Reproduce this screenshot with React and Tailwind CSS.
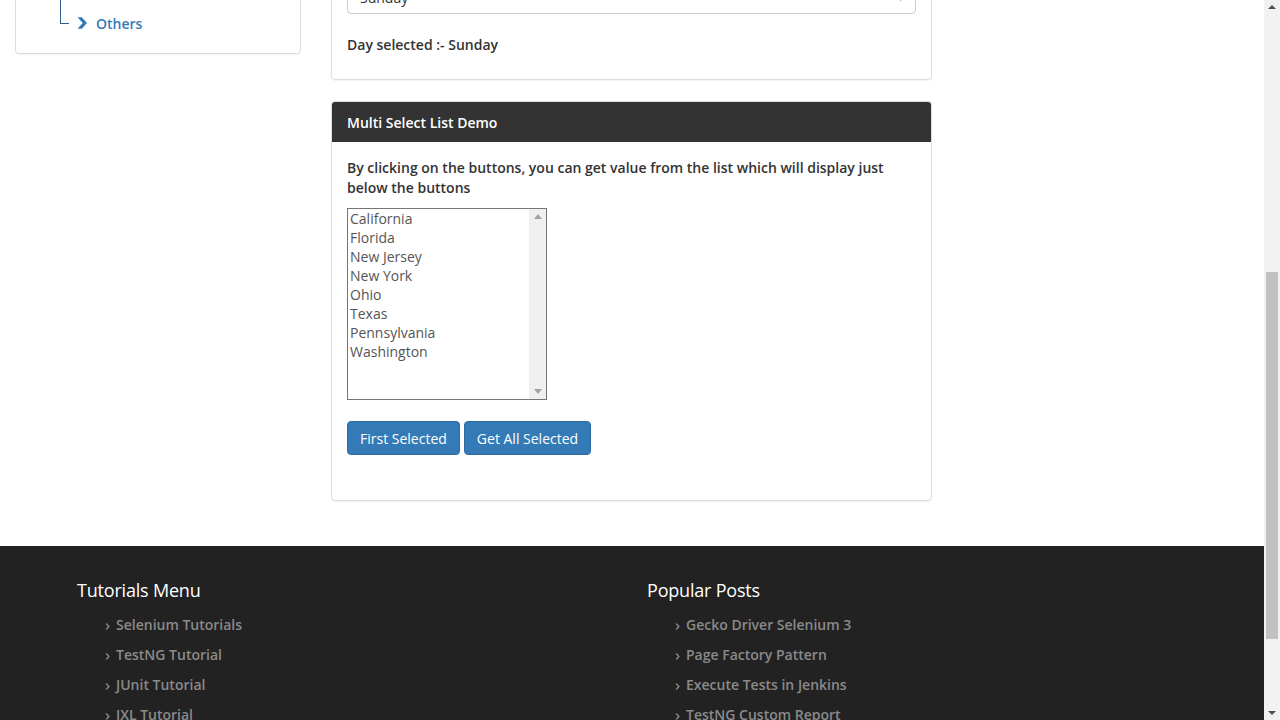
import React from "react";

const font = { fontFamily: "'Open Sans', Lato, sans-serif" };

function Chevron({ className = "" }) {
  return (
    <svg viewBox="0 0 10 12" className={className} fill="currentColor">
      <path d="M0.5 0.3 L4.8 0.3 L10 6 L4.8 11.7 L0.5 11.7 L5.7 6 Z" />
    </svg>
  );
}

function SmallChevron() {
  return (
    <svg viewBox="0 0 5 7" className="w-[5px] h-[7px] mr-[6px] mt-[4px]" fill="currentColor">
      <path d="M0.3 0.5 L2.2 0.5 L4.8 3.5 L2.2 6.5 L0.3 6.5 L2.9 3.5 Z" />
    </svg>
  );
}

const states = ["California", "Florida", "New Jersey", "New York", "Ohio", "Texas", "Pennsylvania", "Washington"];
const tutorials = ["Selenium Tutorials", "TestNG Tutorial", "JUnit Tutorial", "JXL Tutorial"];
const posts = ["Gecko Driver Selenium 3", "Page Factory Pattern", "Execute Tests in Jenkins", "TestNG Custom Report"];

function FooterCol({ title, items }) {
  return (
    <div>
      <h3 className="text-[18px] leading-[24px] text-white font-normal tracking-[-0.2px]">{title}</h3>
      <ul className="mt-[7px] pl-[28px]">
        {items.map((t) => (
          <li key={t} className="flex items-center h-[30px] text-[14px] font-semibold text-[#8a8a8a]">
            <SmallChevron />
            <span>{t}</span>
          </li>
        ))}
      </ul>
    </div>
  );
}

export default function App() {
  return (
    <div className="relative w-[1280px] h-[720px] overflow-hidden bg-white text-[#333]" style={font}>
      <div className="w-[1264px] mt-[-40px]">
        {/* Upper content */}
        <div className="flex items-start">
          {/* Sidebar */}
          <div className="ml-[15px] w-[286px] border border-[#ddd] rounded-[4px] shadow-[0_1px_1px_rgba(0,0,0,0.05)] pb-[15px]">
            <div className="relative pl-[44px] pt-[17px]">
              <div className="absolute left-[44px] top-0 w-[9px] h-[63px] border-l border-b border-[#2f5f8f]" />
              <div className="flex items-center h-[30px] pl-[17px] text-[#337ab7] text-[14px] font-semibold">
                <Chevron className="w-[10px] h-[12px] mr-[9px]" />
                <span>List Box</span>
              </div>
              <div className="flex items-center h-[30px] pl-[17px] text-[#337ab7] text-[14px] font-semibold">
                <Chevron className="w-[10px] h-[12px] mr-[9px]" />
                <span>Others</span>
              </div>
            </div>
          </div>

          {/* Main column */}
          <div className="ml-[30px] mt-[14px] w-[601px]">
            <div className="border border-[#ddd] rounded-[4px] shadow-[0_1px_1px_rgba(0,0,0,0.05)] px-[15px] pt-[5px] pb-[24px]">
              <div className="h-[34px] border border-[#ccc] rounded-[4px] flex items-center justify-between px-[12px] text-[14px]">
                <span>Sunday</span>
                <span className="text-[10px]">▾</span>
              </div>
              <p className="mt-[21px] text-[14px] leading-[20px] font-semibold">Day selected :- Sunday</p>
            </div>

            <div className="mt-[21px] border border-[#ddd] rounded-[4px] overflow-hidden shadow-[0_1px_1px_rgba(0,0,0,0.05)]">
              <div className="h-[40px] bg-[#333333] text-white text-[14px] font-semibold flex items-center px-[15px]">
                Multi Select List Demo
              </div>
              <div className="px-[15px] pt-[16px] pb-[45px]">
                <p className="text-[14px] leading-[20px] font-semibold">
                  By clicking on the buttons, you can get value from the list which will display just below the buttons
                </p>
                <div className="mt-[10px] w-[200px] h-[192px] border border-[#767676] flex">
                  <div className="flex-1 pl-[2px] text-[14px] text-[#555]">
                    {states.map((s) => (
                      <div key={s} className="h-[19px] leading-[19px]">{s}</div>
                    ))}
                  </div>
                  <div className="w-[17px] bg-[#f0f0f0] flex flex-col justify-between items-center py-[5px]">
                    <svg viewBox="0 0 8 5" className="w-[8px] h-[5px]" fill="#a3a3a3"><path d="M0 5 L4 0 L8 5 Z" /></svg>
                    <svg viewBox="0 0 8 5" className="w-[8px] h-[5px]" fill="#a3a3a3"><path d="M0 0 L8 0 L4 5 Z" /></svg>
                  </div>
                </div>
                <div className="mt-[21px] flex gap-[4px]">
                  <button className="h-[34px] px-[12px] bg-[#337ab7] border border-[#2e6da4] rounded-[4px] text-white text-[14px]">First Selected</button>
                  <button className="h-[34px] px-[12px] bg-[#337ab7] border border-[#2e6da4] rounded-[4px] text-white text-[14px]">Get All Selected</button>
                </div>
              </div>
            </div>
          </div>
        </div>

        {/* Footer */}
        <footer className="mt-[45px] bg-[#222222] h-[300px] pt-[32px] pl-[77px]">
          <div className="grid grid-cols-[570px_570px]">
            <FooterCol title="Tutorials Menu" items={tutorials} />
            <FooterCol title="Popular Posts" items={posts} />
          </div>
        </footer>
      </div>

      {/* Browser scrollbar */}
      <div className="absolute right-0 top-0 w-[16px] h-[720px] bg-[#f1f1f1]">
        <svg viewBox="0 0 8 4" className="absolute left-[4px] top-[5px] w-[8px] h-[4px]" fill="#505050"><path d="M0 4 L4 0 L8 4 Z" /></svg>
        <div className="absolute left-[2px] top-[272px] w-[12px] h-[367px] bg-[#c1c1c1]" />
        <svg viewBox="0 0 8 4" className="absolute left-[4px] bottom-[5px] w-[8px] h-[4px]" fill="#505050"><path d="M0 0 L8 0 L4 4 Z" /></svg>
      </div>
    </div>
  );
}
